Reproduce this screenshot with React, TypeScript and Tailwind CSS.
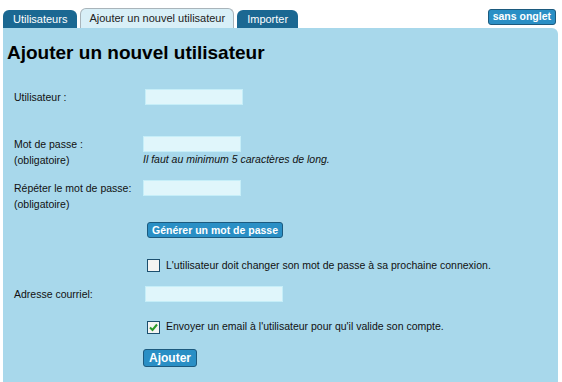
import React from 'react';

const FONT = { fontFamily: '"Liberation Sans", Arial, sans-serif' };

function Tab({ label, active }: { label: string; active?: boolean }) {
  return active ? (
    <div className="flex h-[20px] items-center rounded-t-[6px] border border-b-0 border-[#a9b4ba] bg-[#d8eff7] px-[8px] text-[11px] text-[#222]">
      {label}
    </div>
  ) : (
    <div className="mt-[1px] flex h-[18px] items-center rounded-t-[6px] bg-[#1b6892] px-[10px] text-[11px] text-white">
      {label}
    </div>
  );
}

function Field({ w }: { w: string }) {
  return <div className={`h-[16px] border border-[#c6eef8] bg-[#e0f6fb] ${w}`} />;
}

function BlueButton({ label, big }: { label: string; big?: boolean }) {
  return (
    <button
      type="button"
      className={`rounded-[3px] border border-[#1c5a7e] bg-[#2a8fc5] font-bold text-white ${
        big ? 'h-[18px] px-[5px] text-[12px]' : 'h-[16px] px-[4px] text-[10.5px]'
      } leading-none`}
    >
      {label}
    </button>
  );
}

function Check({ checked }: { checked?: boolean }) {
  return (
    <div className="flex h-[13px] w-[13px] items-center justify-center border border-[#1c4f6e] bg-[#f4f4f2]">
      {checked && (
        <svg width="9" height="9" viewBox="0 0 9 9">
          <path d="M1 4.5 L3.5 7 L8 1.5" fill="none" stroke="#2a9a2a" strokeWidth="2" />
        </svg>
      )}
    </div>
  );
}

export default function App() {
  return (
    <div className="h-[382px] w-[562px] overflow-hidden bg-white" style={FONT}>
      <div className="flex items-end justify-between pl-[3px] pr-[6px] pt-[8px]">
        <div className="flex items-end gap-[3px]">
          <Tab label="Utilisateurs" />
          <Tab label="Ajouter un nouvel utilisateur" active />
          <Tab label="Importer" />
        </div>
        <div className="mb-[3px] flex h-[16px] items-center rounded-[3px] border border-[#1c5a7e] bg-[#2a8fc5] px-[4px] text-[10.5px] font-bold text-white">
          sans onglet
        </div>
      </div>

      <div className="ml-[3px] mr-[4px] h-[355px] rounded-tr-[6px] bg-[#a8d8eb] text-[10.5px] text-[#111]">
        <h1 className="pl-[4px] pt-[13px] text-[19px] font-bold leading-[24px] text-black">
          Ajouter un nouvel utilisateur
        </h1>

        <div className="mt-[24px] flex">
          <div className="w-[142px] pl-[11px] leading-[16px]">Utilisateur :</div>
          <Field w="w-[98px]" />
        </div>

        <div className="mt-[31px] flex">
          <div className="w-[140px] pl-[11px] leading-[16px]">
            <div>Mot de passe :</div>
            <div>(obligatoire)</div>
          </div>
          <div>
            <Field w="w-[98px]" />
            <div className="italic leading-[14px]">Il faut au minimum 5 caractères de long.</div>
          </div>
        </div>

        <div className="mt-[12px] flex">
          <div className="w-[140px] pl-[11px] leading-[16px]">
            <div>Répéter le mot de passe:</div>
            <div>(obligatoire)</div>
          </div>
          <Field w="w-[98px]" />
        </div>

        <div className="mt-[10px] pl-[144px]">
          <BlueButton label="Générer un mot de passe" />
        </div>

        <div className="mt-[19px] flex items-center gap-[6px] pl-[144px]">
          <Check />
          <span>L'utilisateur doit changer son mot de passe à sa prochaine connexion.</span>
        </div>

        <div className="mt-[13px] flex">
          <div className="w-[142px] pl-[11px] leading-[16px]">Adresse courriel:</div>
          <Field w="w-[138px]" />
        </div>

        <div className="mt-[17px] flex items-center gap-[6px] pl-[144px]">
          <Check checked />
          <span>Envoyer un email à l'utilisateur pour qu'il valide son compte.</span>
        </div>

        <div className="mt-[14px] pl-[140px]">
          <BlueButton label="Ajouter" big />
        </div>
      </div>
    </div>
  );
}
